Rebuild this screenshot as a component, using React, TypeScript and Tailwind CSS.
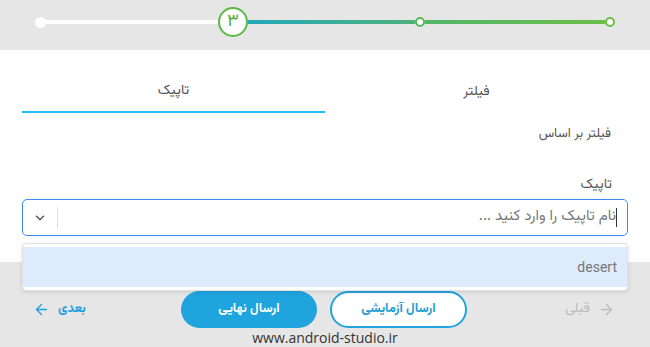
import { ArrowLeft, ArrowRight, ChevronDown } from "lucide-react";

const fa = "font-['Vazirmatn','DejaVu_Sans','Noto_Sans',sans-serif]";

function Stepper() {
  return (
    <div className="flex h-[50px] shrink-0 items-start bg-[#e6e6e6] pl-[35px] pt-[7px]">
      <div className="flex h-[30px] items-center">
        <div className="h-[11px] w-[11px] rounded-full bg-white" />
        <div className="h-[4px] w-[172px] bg-white" />
        <div
          className={`flex h-[30px] w-[30px] items-center justify-center rounded-full border-2 border-[#5cb946] bg-white text-[18px] text-[#4fae3c] ${fa}`}
        >
          ۳
        </div>
        <div className="h-[4px] w-[167px] bg-gradient-to-r from-[#22a8b9] to-[#4db27a]" />
        <div className="h-[10px] w-[10px] rounded-full border-2 border-[#58b85c] bg-white" />
        <div className="h-[4px] w-[180px] bg-gradient-to-r from-[#52b66a] to-[#6bbf45]" />
        <div className="h-[10px] w-[10px] rounded-full border-2 border-[#6bbf45] bg-white" />
      </div>
    </div>
  );
}

function Tabs() {
  return (
    <div dir="rtl" className="grid grid-cols-2">
      <button className={`pt-[32px] pb-[11px] text-[14px] leading-[18px] text-[#555] ${fa}`}>
        فیلتر
      </button>
      <button
        className={`border-b-2 border-[#1fc0f1] pt-[32px] pb-[11px] text-[14px] leading-[18px] text-[#555] ${fa}`}
      >
        تاپیک
      </button>
    </div>
  );
}

function TopicSelect() {
  return (
    <div className="relative">
      <div className="flex h-[37px] items-center rounded-[5px] border-[1.5px] border-[#3b8af5] bg-white">
        <div className="flex w-[34px] items-center justify-center">
          <ChevronDown size={14} strokeWidth={2.5} className="text-[#555]" />
        </div>
        <div className="h-[21px] w-px bg-[#ddd]" />
        <div
          dir="rtl"
          className={`flex flex-1 items-center pr-[10px] text-[15px] text-[#777] ${fa}`}
        >
          <span className="h-[19px] w-px bg-[#333]" />
          <span>نام تاپیک را وارد کنید ...</span>
        </div>
      </div>
      <div className="absolute left-0 right-0 top-[44px] z-10 rounded-[4px] border border-[#e2e2e2] bg-white py-[3px] shadow-[0_1px_4px_rgba(0,0,0,0.12)]">
        <div
          dir="rtl"
          className="flex h-[40px] items-center bg-[#deebfc] pr-[10px] font-['Roboto',sans-serif] text-[14px] text-[#777]"
        >
          desert
        </div>
      </div>
    </div>
  );
}

function Footer() {
  return (
    <div className="flex flex-1 flex-col items-center bg-[#e6e6e6] pt-[29px]">
      <div className="flex w-full items-center px-[33px]">
        <div className="flex flex-1 justify-start">
          <button
            className={`flex items-center gap-[8px] text-[13px] font-bold text-[#1f9fe0] ${fa}`}
          >
            <ArrowLeft size={17} strokeWidth={1.8} />
            <span>بعدی</span>
          </button>
        </div>
        <div className="flex gap-[13px]">
          <button
            className={`h-[37px] w-[136px] rounded-full bg-[#20a4de] text-[13px] font-bold text-white ${fa}`}
          >
            ارسال نهایی
          </button>
          <button
            className={`h-[37px] w-[137px] rounded-full border-2 border-[#22a5df] bg-white text-[13px] font-bold text-[#1a9bd6] ${fa}`}
          >
            ارسال آزمایشی
          </button>
        </div>
        <div className="flex flex-1 justify-end pr-[2px]">
          <button
            className={`flex items-center gap-[8px] text-[14px] text-[#bbb] ${fa}`}
          >
            <span>قبلی</span>
            <ArrowRight size={17} strokeWidth={1.8} />
          </button>
        </div>
      </div>
      <div className="mt-[2px] font-['Open_Sans',sans-serif] text-[14px] leading-[16px] text-[#333]">
        www.android-studio.ir
      </div>
    </div>
  );
}

export default function App() {
  return (
    <div className="flex h-[347px] w-[650px] flex-col overflow-hidden bg-white">
      <Stepper />
      <div className="h-[212px] shrink-0 bg-white px-[22px]">
        <Tabs />
        <div
          dir="rtl"
          className={`mt-[12px] pr-[17px] text-[13px] leading-[18px] text-[#555] ${fa}`}
        >
          فیلتر بر اساس
        </div>
        <div
          dir="rtl"
          className={`mt-[33px] mb-[5px] pr-[16px] text-[14px] leading-[18px] text-[#555] ${fa}`}
        >
          تاپیک
        </div>
        <TopicSelect />
      </div>
      <Footer />
    </div>
  );
}
